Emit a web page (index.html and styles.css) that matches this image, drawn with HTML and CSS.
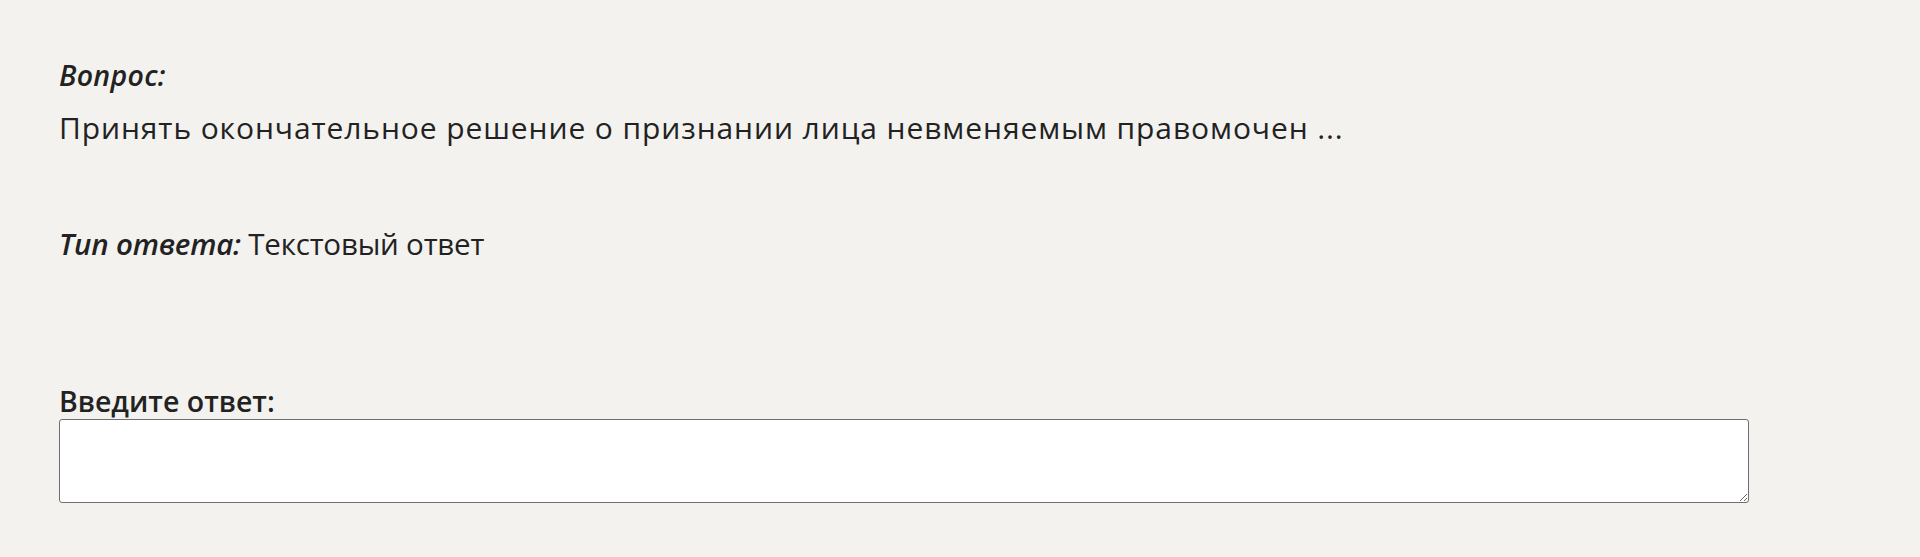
FILE: index.html
```html
<!DOCTYPE html>
<html lang="ru">
<head>
<meta charset="utf-8">
<title>Вопрос</title>
<link rel="stylesheet" href="styles.css">
</head>
<body>
<div class="page">
  <div class="q-label">Вопрос:</div>
  <div class="q-text">Принять окончательное решение о признании лица невменяемым правомочен ...</div>
  <div class="type"><span class="type-label">Тип ответа:</span> Текстовый ответ</div>
  <label class="answer-label" for="answer">Введите ответ:</label>
  <textarea class="answer" id="answer"></textarea>
</div>
</body>
</html>
```

FILE: styles.css
```css
html, body {
  margin: 0;
  padding: 0;
  background: #f3f2ef;
}
body {
  font-family: "Open Sans", "Noto Sans", sans-serif;
  color: #222222;
}
.page {
  padding: 57px 0 0 59px;
}
.q-label {
  font-size: 28.5px;
  line-height: 36px;
  font-style: italic;
  font-weight: 600;
  letter-spacing: 0.3px;
}
.q-text {
  margin-top: 15px;
  font-size: 30px;
  line-height: 40px;
  letter-spacing: 0.9px;
}
.type {
  margin-top: 76px;
  font-size: 29.5px;
  line-height: 40px;
  letter-spacing: -0.2px;
}
.type-label {
  font-style: italic;
  font-weight: 600;
}
.answer-label {
  display: block;
  margin-top: 119px;
  font-size: 28.5px;
  line-height: 36px;
  font-weight: 600;
}
.answer {
  display: block;
  box-sizing: border-box;
  width: 1690px;
  height: 84px;
  margin: 0;
  background: #fff;
  border: 1px solid #6e6e6e;
  border-radius: 3px;
}
```
